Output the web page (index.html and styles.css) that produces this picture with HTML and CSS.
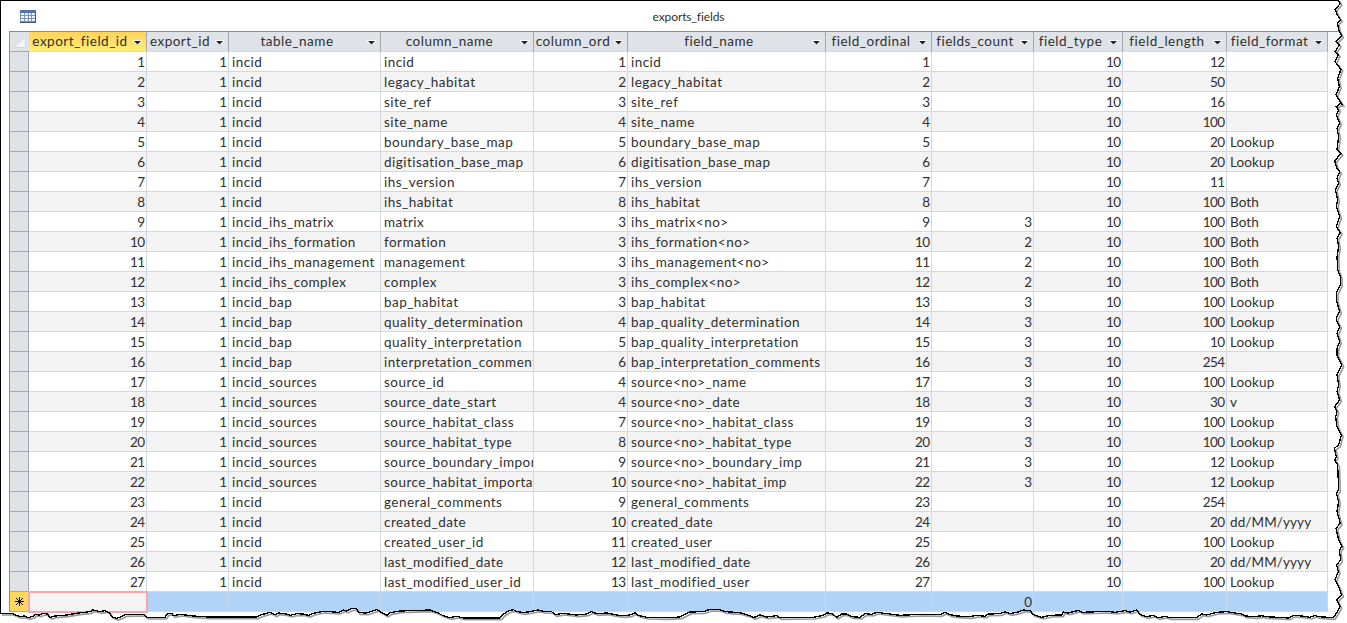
FILE: index.html
```html
<!DOCTYPE html>
<html lang="en">
<head>
    <meta charset="UTF-8">
    <meta name="viewport" content="width=device-width, initial-scale=1.0">
    <title>exports_fields</title>
    <link rel="stylesheet" href="styles.css">
</head>
<body>
    <div class="window">
        <div class="title-bar">
            <svg class="table-icon" width="16" height="13" viewBox="0 0 16 13">
                <rect x="0" y="0" width="16" height="13" fill="#7e93b8"/>
                <rect x="0" y="0" width="16" height="3" fill="#5574ad"/>
                <path d="M1 3h3v2h-3zM5 3h3v2h-3zM9 3h2v2h-2zM12 3h3v2h-3zM1 6h3v2h-3zM5 6h3v2h-3zM9 6h2v2h-2zM12 6h3v2h-3zM1 9h3v2h-3zM5 9h3v2h-3zM9 9h2v2h-2zM12 9h3v2h-3z" fill="#eef3fb"/>
                <path d="M0 12.5h16M15.5 2v11" stroke="#3d5580"/>
            </svg>
            <span class="title">exports_fields</span>
        </div>

        <table class="datasheet">
            <colgroup>
                <col class="c-select"><col class="c-id"><col class="c-export"><col class="c-table">
                <col class="c-column"><col class="c-order"><col class="c-field"><col class="c-ordinal">
                <col class="c-count"><col class="c-type"><col class="c-length"><col class="c-format"><col class="c-rest">
            </colgroup>
            <thead>
                <tr id="head"></tr>
            </thead>
            <tbody id="rows"></tbody>
        </table>
    </div>

    <!-- Torn paper edge along the right and the bottom -->
    <svg class="torn-edge" viewBox="0 0 4041 1869">
        <path id="outside" class="outside"/>
        <polyline id="shadow" class="shadow"/>
        <polyline id="edge" class="edge"/>
        <path class="frame" d="M4016 1.5H1.5V1840"/>
    </svg>

    <script>
        const columns = ['export_field_id', 'export_id', 'table_name', 'column_name', 'column_ord', 'field_name',
            'field_ordinal', 'fields_count', 'field_type', 'field_length', 'field_format'];
        const textColumns = [2, 3, 5];

        // table, column, order, field, count, length, format
        const fields = [
            ['incid', 'incid', 1, 'incid', '', 12, ''],
            ['incid', 'legacy_habitat', 2, 'legacy_habitat', '', 50, ''],
            ['incid', 'site_ref', 3, 'site_ref', '', 16, ''],
            ['incid', 'site_name', 4, 'site_name', '', 100, ''],
            ['incid', 'boundary_base_map', 5, 'boundary_base_map', '', 20, 'Lookup'],
            ['incid', 'digitisation_base_map', 6, 'digitisation_base_map', '', 20, 'Lookup'],
            ['incid', 'ihs_version', 7, 'ihs_version', '', 11, ''],
            ['incid', 'ihs_habitat', 8, 'ihs_habitat', '', 100, 'Both'],
            ['incid_ihs_matrix', 'matrix', 3, 'ihs_matrix<no>', 3, 100, 'Both'],
            ['incid_ihs_formation', 'formation', 3, 'ihs_formation<no>', 2, 100, 'Both'],
            ['incid_ihs_management', 'management', 3, 'ihs_management<no>', 2, 100, 'Both'],
            ['incid_ihs_complex', 'complex', 3, 'ihs_complex<no>', 2, 100, 'Both'],
            ['incid_bap', 'bap_habitat', 3, 'bap_habitat', 3, 100, 'Lookup'],
            ['incid_bap', 'quality_determination', 4, 'bap_quality_determination', 3, 100, 'Lookup'],
            ['incid_bap', 'quality_interpretation', 5, 'bap_quality_interpretation', 3, 10, 'Lookup'],
            ['incid_bap', 'interpretation_comments', 6, 'bap_interpretation_comments', 3, 254, ''],
            ['incid_sources', 'source_id', 4, 'source<no>_name', 3, 100, 'Lookup'],
            ['incid_sources', 'source_date_start', 4, 'source<no>_date', 3, 30, 'v'],
            ['incid_sources', 'source_habitat_class', 7, 'source<no>_habitat_class', 3, 100, 'Lookup'],
            ['incid_sources', 'source_habitat_type', 8, 'source<no>_habitat_type', 3, 100, 'Lookup'],
            ['incid_sources', 'source_boundary_importance', 9, 'source<no>_boundary_imp', 3, 12, 'Lookup'],
            ['incid_sources', 'source_habitat_importance', 10, 'source<no>_habitat_imp', 3, 12, 'Lookup'],
            ['incid', 'general_comments', 9, 'general_comments', '', 254, ''],
            ['incid', 'created_date', 10, 'created_date', '', 20, 'dd/MM/yyyy'],
            ['incid', 'created_user_id', 11, 'created_user', '', 100, 'Lookup'],
            ['incid', 'last_modified_date', 12, 'last_modified_date', '', 20, 'dd/MM/yyyy'],
            ['incid', 'last_modified_user_id', 13, 'last_modified_user', '', 100, 'Lookup']
        ];

        function addCell(row, tag, className, text) {
            const cell = document.createElement(tag);
            cell.className = className;
            const label = document.createElement('span');
            label.textContent = text;
            cell.appendChild(label);
            row.appendChild(cell);
            return cell;
        }

        const head = document.getElementById('head');
        addCell(head, 'th', 'corner', '').innerHTML =
            '<svg class="corner-mark" width="12" height="11" viewBox="0 0 12 11"><path d="M12 0V11H0z" fill="#f3f6fa"/><path d="M11.5 0V10.5H0" fill="none" stroke="#cfd7e2"/></svg>';
        columns.forEach(function(name, i) {
            const th = addCell(head, 'th', i === 0 ? 'heading selected' : 'heading', name);
            th.insertAdjacentHTML('beforeend',
                '<svg class="drop" width="9" height="5" viewBox="0 0 9 5"><path d="M0 0h9v1.5L4.5 5 0 1.5z" fill="#fff"/><path d="M1 1h7L4.500 4.600z" fill="#222"/></svg>');
        });
        addCell(head, 'th', 'rest', '');

        const rows = document.getElementById('rows');
        fields.forEach(function(f, i) {
            const row = document.createElement('tr');
            addCell(row, 'td', 'selector', '');
            [i + 1, 1, f[0], f[1], f[2], f[3], i + 1, f[4], 10, f[5], f[6]].forEach(function(value, c) {
                const type = textColumns.includes(c) ? 'text' : 'number';
                addCell(row, 'td', c === 10 ? 'text format' : type, value);
            });
            addCell(row, 'td', 'rest', '');
            rows.appendChild(row);
        });

        // Blank row for a new record
        const blank = document.createElement('tr');
        blank.className = 'new-record';
        addCell(blank, 'td', 'selector', '').innerHTML =
            '<svg class="star" width="9" height="9" viewBox="0 0 9 9"><path d="M4.500 0V9M0 4.500H9M1 1L8 8M8 1L1 8" stroke="#111"/></svg>';
        columns.forEach(function(name, c) {
            addCell(blank, 'td', c === 0 ? 'number current' : 'number', c === 7 ? '0' : '');
        });
        addCell(blank, 'td', 'rest', '');
        rows.appendChild(blank);

        // Edge points in thirds of a pixel: each part has its own origin
        const edgeParts = [
            [3240, 0, '775,0 780,12 765,28 772,45 782,60 772,68 776,90 785,108 768,125 778,135 765,155 775,165 765,185 783,208 773,235 778,260 768,285 785,312'],
            [3861, 300, '160,10 148,20 155,30 148,45 158,70 150,85 155,110 150,150 162,160 143,183 150,205 158,215 150,235 155,250 145,268 152,300 148,320 158,350 148,380 160,398 150,415 155,440 150,470 152,510 160,530 160,555 148,580 148,600 158,635 148,655'],
            [3861, 960, '148,0 158,20 150,40 158,65 150,85 150,105 165,135 150,165 155,195 150,215 158,240 143,260 150,275 146,290 150,320 163,345 155,375 142,385 148,410 143,420 152,435 155,510 148,520 155,545 150,575 160,610 147,625 155,660 165,680'],
            [3000, 1650, '1018,0 1022,30 1010,45 1015,65 1005,90 1018,115 1025,135 1010,150 1020,170 1012,185 1000,203 955,200 945,196 930,202 905,198 880,196 865,204 800,200 785,197 765,200 735,198 725,192 680,185 650,187 620,195 605,192 590,203 510,203 495,199 475,203 460,196 440,200 420,193 410,180 390,186 375,182 345,187 320,184 245,187 235,181 205,189 190,186 185,195 150,196 125,202 100,194 90,182 70,180 55,186 30,191 15,185'],
            [1980, 1650, '1020,191 985,192 975,199 950,196 930,200 890,198 870,194 855,187 840,194 780,193 720,196 690,192 650,187 635,193 615,191 600,202 575,200 560,192 545,192 530,202 515,190 500,189 490,196 460,202 360,203 350,197 320,201 300,195 280,203 270,197 240,188 195,185 180,179 150,178 130,185 90,186 60,201 20,203'],
            [990, 1650, '1000,203 950,202 925,196 915,188 900,195 880,197 860,195 830,189 800,191 785,185 770,192 740,195 700,190 675,194 665,185 640,184 625,180 605,184 580,188 560,184 550,179 535,183 520,193 510,204 400,204 380,199 360,203 340,197 320,187 300,180 210,183 180,188 170,196 160,190 140,179 110,189 85,188 80,176 65,176 50,183 40,180 25,187'],
            [0, 1650, '990,185 970,184 940,190 925,196 910,192 890,191 870,196 860,192 835,189 825,195 810,187 785,194 770,201 625,201 580,198 540,193 520,197 515,190 502,191 495,202 440,202 432,193 375,194 365,200 350,205 335,200 328,188 315,182 300,185 290,182 278,180 270,185 235,189 200,195 165,198 150,202 142,192 130,190 118,195 105,193 100,198 85,203 72,198 60,200 35,190 0,190']
        ];
        const points = edgeParts.map(function(part) {
            return part[2].split(' ').map(function(p) {
                const xy = p.split(',');
                return (part[0] + Number(xy[0])) + ',' + (part[1] + Number(xy[1]));
            }).join(' ');
        }).join(' ');
        document.getElementById('edge').setAttribute('points', points);
        document.getElementById('shadow').setAttribute('points', points);
        document.getElementById('outside').setAttribute('d', 'M' + points + ' 0,1869 4041,1869 4041,0Z');
    </script>
</body>
</html>
```
FILE: styles.css
```css
body {
    margin: 0;
    background: #fff;
    overflow: hidden;
    font-family: Lato, "Open Sans", sans-serif;
    font-size: 13.5px;
    font-variant-ligatures: none;
    color: #303030;
}

.window {
    width: 1347px;
    height: 623px;
    overflow: hidden;
}

.title-bar {
    height: 31px;
    display: grid;
    grid-template-columns: 20px 1338px;
    align-items: center;
}

.table-icon {
    margin-top: 2px;
    grid-column: 2;
    grid-row: 1;
}

.title {
    grid-column: 1 / 3;
    grid-row: 1;
    padding: 2px 0 0 19px;
    text-align: center;
    font-size: 12px;
    letter-spacing: -0.1px;
    line-height: 16px;
}

.datasheet {
    width: 1338px;
    margin-left: 9px;
    table-layout: fixed;
    border-collapse: separate;
    border-spacing: 0;
}

.c-select { width: 20px; }
.c-id { width: 118px; }
.c-export { width: 82px; }
.c-table { width: 152px; }
.c-column { width: 153px; }
.c-order { width: 94px; }
.c-field { width: 198px; }
.c-ordinal { width: 106px; }
.c-count { width: 102px; }
.c-type { width: 89px; }
.c-length { width: 104px; }
.c-format { width: 101px; }
.c-rest { width: 19px; }

th, td {
    box-sizing: border-box;
    padding: 0;
    overflow: hidden;
    white-space: nowrap;
    line-height: 19px;
    font-weight: normal;
    border-right: 1px solid #d0d7e5;
    border-bottom: 1px solid #d0d7e5;
}

th {
    height: 21px;
    background: #dfe2e7;
    border-top: 1px solid #868b95;
    border-right-color: #a3a8b2;
    text-align: center;
    letter-spacing: 0.5px;
}

td {
    height: 20px;
}

td span, th span {
    display: block;
    height: 19px;
}

td span {
    line-height: 21px;
}

th span {
    padding-right: 15px;
}

.drop {
    display: block;
    float: right;
    margin: -11px 4px 0 0;
}

.corner, .selector {
    background: #dfe2e7;
    border-left: 1px solid #868b95;
    border-right: 1px solid #a3a8b2;
    border-bottom-color: #a3a8b2;
}

.corner {
    border-right: 0;
}

.corner-mark {
    display: block;
    margin: 2px 0 0 4px;
}

.selected {
    background: linear-gradient(#ffd35c, #ffee75);
}

tbody tr:nth-child(even) td {
    background: #f3f3f3;
}

tbody .selector,
tbody tr:nth-child(even) .selector {
    background: #dfe2e7;
}

.number span {
    text-align: right;
    letter-spacing: -0.6px;
    padding-right: 1.5px;
}

.text span {
    padding-left: 3px;
    letter-spacing: 0.46px;
}

.format span {
    letter-spacing: 0.1px;
}

.rest,
tbody tr:nth-child(even) .rest {
    background: #fff;
    border-right: 0;
    border-bottom-color: #f2f3f6;
}

th.rest {
    background: #f5f6fa;
}

tbody tr.new-record:nth-child(even) td {
    background: #b0d3f7;
}

tbody tr.new-record:nth-child(even) .selector {
    background: #ffd75e;
}

tbody tr.new-record:nth-child(even) .current {
    background: #f3f3f3;
    outline: 2px solid #f8a5a9;
    outline-offset: -1px;
}

tbody tr.new-record:nth-child(even) .rest {
    background: #fff;
}

.star {
    display: block;
    margin: 0 auto;
}

.torn-edge {
    position: absolute;
    left: 0;
    top: 0;
    width: 1347px;
    height: 623px;
}

.outside {
    fill: #fff;
}

.edge, .frame {
    fill: none;
    stroke: #000;
    stroke-width: 4;
    shape-rendering: crispEdges;
}

.frame {
    stroke-width: 3;
}

.shadow {
    fill: none;
    stroke: #999;
    stroke-width: 5;
    transform: translate(5px, 5px);
}
```
